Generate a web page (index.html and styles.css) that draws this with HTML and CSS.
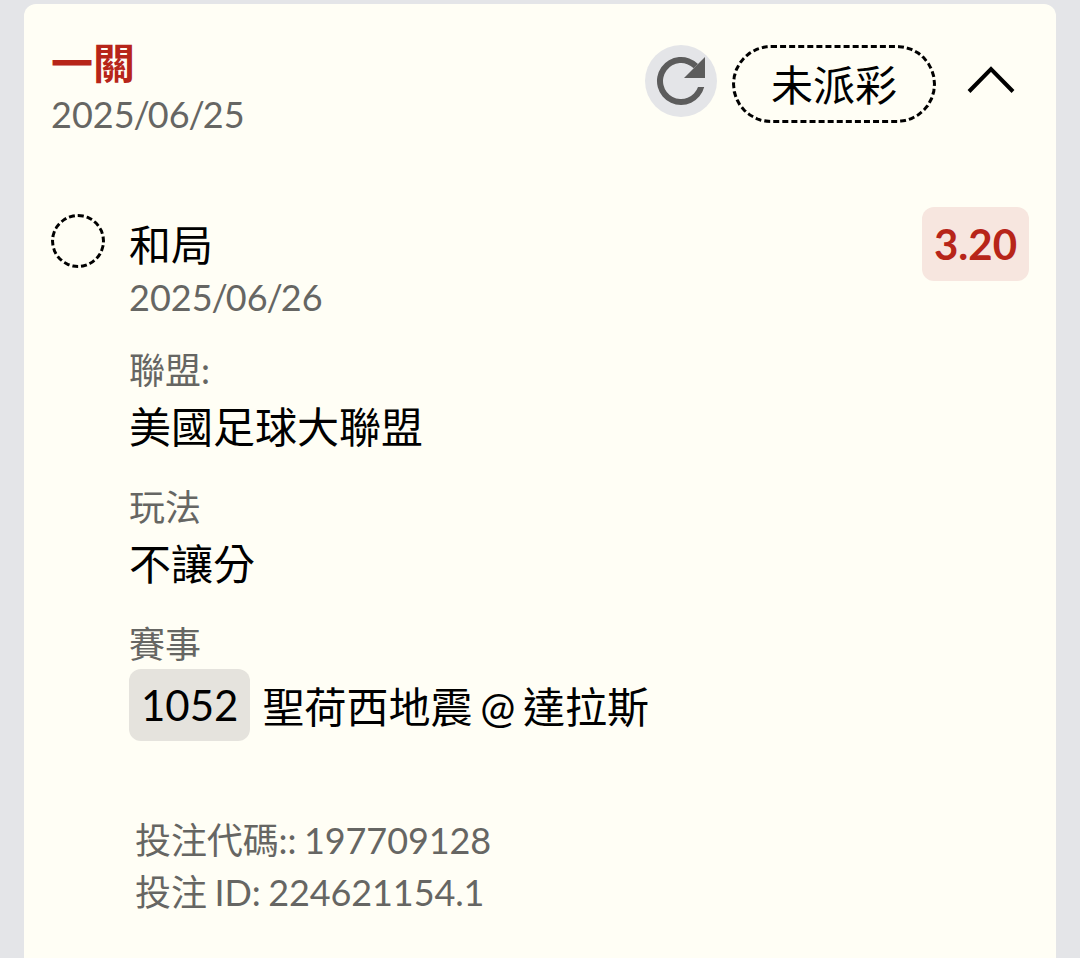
FILE: index.html
```
<!DOCTYPE html>
<html lang="zh-Hant">
<head>
    <meta charset="UTF-8">
    <meta name="viewport" content="width=device-width, initial-scale=1.0">
    <title>一關</title>
    <link rel="stylesheet" href="styles.css">
</head>
<body>
    <div class="card">
        <div class="card-header">
            <div class="bet-type">
                <h1>一關</h1>
                <div class="date">2025<span>/</span>06<span>/</span>25</div>
            </div>
            <button class="refresh" aria-label="refresh">
                <svg width="72" height="72" viewBox="0 0 72 72">
                    <path d="M53 19A24 24 0 1 0 59.2 42H53A18 18 0 1 1 48.7 23.3Z" fill="#5c5c5c"/>
                    <path d="M60 12V33H39Z" fill="#5c5c5c"/>
                </svg>
            </button>
            <div class="status">未派彩</div>
            <button class="toggle" aria-label="toggle">
                <svg width="50" height="32" viewBox="0 0 50 32">
                    <path d="M3 27.5L25 5L47 27.5" fill="none" stroke="#000" stroke-width="4"/>
                </svg>
            </button>
        </div>

        <div class="selection">
            <div class="circle"></div>
            <div class="details">
                <div class="value">和局</div>
                <div class="date">2025<span>/</span>06<span>/</span>26</div>

                <div class="label">聯盟:</div>
                <div class="value">美國足球大聯盟</div>

                <div class="label">玩法</div>
                <div class="value">不讓分</div>

                <div class="label">賽事</div>
                <div class="match">
                    <span class="code">1052</span>
                    <span class="value teams">聖荷西地震 @ 達拉斯</span>
                </div>
            </div>
            <div class="odds">3.20</div>
        </div>

        <div class="bet-info">
            <div>投注代碼:: 197709128</div>
            <div>投注 ID: 224621154.1</div>
        </div>
    </div>
</body>
</html>
```
FILE: styles.css
```
* {
    box-sizing: border-box;
}
body {
    margin: 0;
    padding: 4px 24px 0;
    height: 958px;
    overflow: hidden;
    background-color: #e4e5e8;
    font-family: Lato, "Noto Sans CJK TC", sans-serif;
    font-size: 36px;
    line-height: 52px;
    color: #000;
}
button {
    border: none;
    padding: 0;
    background: none;
}
svg {
    display: block;
}
.card {
    height: 954px;
    padding: 35px 27px 0;
    background-color: #fffef5;
    border-radius: 12px 12px 0 0;
}
.card-header {
    display: flex;
    align-items: flex-start;
    height: 168px;
}
.bet-type {
    flex: 1;
}
h1 {
    margin: 0;
    font-size: 42px;
    line-height: 48px;
    color: #b72519;
}
.date,
.label,
.bet-info {
    color: #666663;
}
.date span {
    margin: 0 -2px 0 -1px;
}
.bet-type .date {
    padding-top: 1px;
}
.refresh {
    margin-top: 6px;
    border-radius: 50%;
    background-color: #e4e5e8;
}
.status {
    width: 204px;
    height: 78px;
    margin: 6px 30px 0 15px;
    border: 3px dashed #000;
    border-radius: 39px;
    font-size: 42px;
    line-height: 74px;
    text-align: center;
}
.toggle {
    margin: 25px 13px 0 0;
}
.selection {
    display: flex;
    align-items: flex-start;
}
.circle {
    width: 54px;
    height: 54px;
    margin: 7px 24px 0 0;
    border: 3px dashed #000;
    border-radius: 50%;
}
.details {
    flex: 1;
    padding-top: 12px;
}
.value {
    font-size: 42px;
}
.label {
    margin-top: 21px;
}
.label + .value {
    line-height: 62px;
    padding-bottom: 2px;
}
.match {
    display: flex;
    align-items: center;
    gap: 12px;
    margin-top: -1px;
}
.teams {
    padding-top: 3px;
    word-spacing: -3px;
}
.code,
.odds {
    padding: 0 12px;
    border-radius: 12px;
    font-size: 42px;
    line-height: 72px;
}
.code {
    background-color: #e5e3dd;
}
.odds {
    line-height: 74px;
    font-weight: bold;
    color: #b72519;
    background-color: #f7e6df;
}
.bet-info {
    margin: 73px 0 0 84px;
    word-spacing: -1.5px;
    letter-spacing: -0.1px;
}
```
